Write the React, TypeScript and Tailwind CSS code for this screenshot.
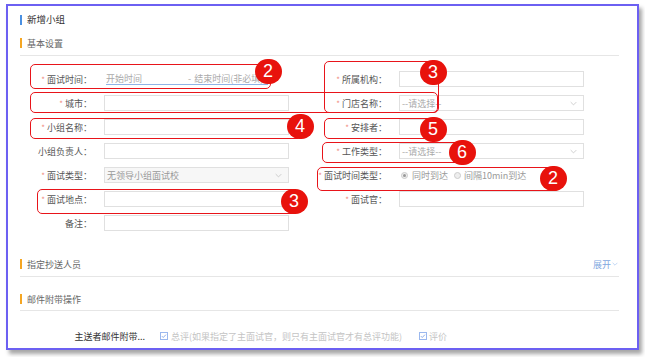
import React from 'react';

const font = { fontFamily: '"Noto Sans CJK SC", "Noto Sans", sans-serif' };

const Chevron: React.FC<{ className?: string }> = ({ className }) => (
  <svg viewBox="0 0 10 6" className={className} fill="none" stroke="currentColor" strokeWidth="1">
    <path d="M1 1l4 4 4-4" />
  </svg>
);

const Label: React.FC<{ text: string; required?: boolean; w: string }> = ({ text, required, w }) => (
  <div className={`${w} shrink-0 pr-[12px] text-right text-[#555] whitespace-nowrap`}>
    {required && <span className="text-[#f08a80] mr-[2px] text-[8px]">*</span>}
    {text}：
  </div>
);

const Input: React.FC = () => <div className="w-[185px] h-[16px] border border-[#e0e0e0] bg-white" />;

const Select: React.FC<{ text: string; disabled?: boolean }> = ({ text, disabled }) => (
  <div
    className={`w-[185px] h-[16px] border border-[#e0e0e0] flex items-center justify-between pl-[2px] pr-[6px] ${
      disabled ? 'bg-[#f7f7f7] text-[#999]' : 'bg-white text-[#aaa]'
    }`}
  >
    <span>{text}</span>
    <Chevron className="w-[7px] h-[5px] text-[#bbb]" />
  </div>
);

const Row: React.FC<{ left?: React.ReactNode; right?: React.ReactNode }> = ({ left, right }) => (
  <div className="flex h-[24px] items-center">
    <div className="w-[290px] flex items-center">{left}</div>
    <div className="flex items-center">{right}</div>
  </div>
);

const SectionHeader: React.FC<{ title: string; h: string; extra?: React.ReactNode }> = ({ title, h, extra }) => (
  <div className={`${h} flex items-center justify-between border-b border-[#e6e6e6]`}>
    <div className="flex items-center">
      <div className="w-[2px] h-[10px] bg-[#f5a623]" />
      <span className="ml-[5px] text-[#666]">{title}</span>
    </div>
    {extra}
  </div>
);

const Check: React.FC = () => (
  <span className="inline-flex w-[8px] h-[8px] border border-[#9bb8ee] items-center justify-center">
    <svg viewBox="0 0 8 8" className="w-[6px] h-[6px]" fill="none" stroke="#7fa3e6" strokeWidth="1.2">
      <path d="M1.2 4.2l1.8 1.8 3.6-3.8" />
    </svg>
  </span>
);

const Radio: React.FC<{ checked?: boolean }> = ({ checked }) => (
  <span className="inline-flex w-[7px] h-[7px] rounded-full border border-[#ccc] items-center justify-center bg-[#eee]">
    {checked && <span className="w-[3px] h-[3px] rounded-full bg-[#999]" />}
  </span>
);

type Box = { x: number; y: number; w: number; h: number; n: string; bx: number; by: number };

const boxes: Box[] = [
  { x: 30, y: 64, w: 241, h: 25, n: '2', bx: 268, by: 71 },
  { x: 30, y: 92, w: 408, h: 21, n: '', bx: 0, by: 0 },
  { x: 324, y: 61, w: 115, h: 52, n: '3', bx: 433, by: 72 },
  { x: 30, y: 118, w: 272, h: 21, n: '4', bx: 300, by: 126 },
  { x: 324, y: 118, w: 118, h: 21, n: '5', bx: 433, by: 129 },
  { x: 322, y: 142, w: 148, h: 21, n: '6', bx: 462, by: 152 },
  { x: 317, y: 167, w: 243, h: 24, n: '2', bx: 553, by: 178 },
  { x: 37, y: 189, w: 260, h: 25, n: '3', bx: 294, by: 201 },
];

export default function App() {
  return (
    <div className="relative w-[645px] h-[357px] bg-white overflow-hidden text-[9px] leading-none" style={font}>
      <div className="ml-[6px] mt-[4px] w-[633px] h-[346px] border-2 border-[#6c60f2] bg-white shadow-[3px_4px_4px_rgba(0,0,0,0.35)] pl-[12px] pr-[18px]">
        <div className="pt-[7px] h-[21px] flex items-center">
          <div className="w-[2px] h-[10px] bg-[#4a90e2]" />
          <span className="ml-[5px] text-[#333] text-[9.5px]">新增小组</span>
        </div>
        <div className="mt-[4px]">
          <SectionHeader title="基本设置" h="h-[25px]" />
        </div>
        <div className="pt-[11px]">
          <Row
            left={
              <>
                <Label text="面试时间" required w="w-[84px]" />
                <div className="flex items-center text-[#aaa] border-b border-[#8fb4e6] pb-[1px] ml-[2px] w-[162px]">
                  <span className="w-[80px]">开始时间</span>
                  <span className="ml-[2px]">-</span>
                  <span className="ml-[3px]">结束时间(非必填)</span>
                </div>
              </>
            }
            right={
              <>
                <Label text="所属机构" required w="w-[89px]" />
                <Input />
              </>
            }
          />
          <Row
            left={
              <>
                <Label text="城市" required w="w-[84px]" />
                <Input />
              </>
            }
            right={
              <>
                <Label text="门店名称" required w="w-[89px]" />
                <Select text="--请选择--" />
              </>
            }
          />
          <Row
            left={
              <>
                <Label text="小组名称" required w="w-[84px]" />
                <Input />
              </>
            }
            right={
              <>
                <Label text="安排者" required w="w-[89px]" />
                <Input />
              </>
            }
          />
          <Row
            left={
              <>
                <Label text="小组负责人" w="w-[84px]" />
                <Input />
              </>
            }
            right={
              <>
                <Label text="工作类型" required w="w-[89px]" />
                <Select text="--请选择--" />
              </>
            }
          />
          <Row
            left={
              <>
                <Label text="面试类型" required w="w-[84px]" />
                <Select text="无领导小组面试校" disabled />
              </>
            }
            right={
              <>
                <Label text="面试时间类型" required w="w-[89px]" />
                <div className="flex items-center text-[#999] ml-[2px]">
                  <Radio checked />
                  <span className="ml-[4px]">同时到达</span>
                  <span className="ml-[6px]" />
                  <Radio />
                  <span className="ml-[3px]">间隔10min到达</span>
                </div>
              </>
            }
          />
          <Row
            left={
              <>
                <Label text="面试地点" required w="w-[84px]" />
                <Input />
              </>
            }
            right={
              <>
                <Label text="面试官" required w="w-[89px]" />
                <Input />
              </>
            }
          />
          <Row
            left={
              <>
                <Label text="备注" w="w-[84px]" />
                <Input />
              </>
            }
          />
        </div>
        <div className="mt-[17px]">
          <SectionHeader
            title="指定抄送人员"
            h="h-[25px]"
            extra={
              <div className="flex items-center text-[#7fa8e0] mr-[1px]">
                <span>展开</span>
                <Chevron className="ml-[1px] w-[6px] h-[4px] text-[#9cc0ee]" />
              </div>
            }
          />
        </div>
        <div className="mt-[11px]">
          <SectionHeader title="邮件附带操作" h="h-[23px]" />
        </div>
        <div className="mt-[13px] h-[24px] flex items-center">
          <div className="w-[125px] text-right text-[#333]">主送者邮件附带...</div>
          <div className="ml-[15px] flex items-center text-[#c4c4c4]">
            <Check />
            <span className="ml-[3px]">总评(如果指定了主面试官，则只有主面试官才有总评功能)</span>
            <span className="ml-[17px]" />
            <Check />
            <span className="ml-[2px]">评价</span>
          </div>
        </div>
      </div>

      {boxes.map((b, i) => (
        <div
          key={i}
          className="absolute border border-[#e8141a] rounded-[5px]"
          style={{ left: b.x, top: b.y, width: b.w, height: b.h }}
        />
      ))}
      {boxes
        .filter((b) => b.n)
        .map((b, i) => (
          <div
            key={i}
            className="absolute w-[27px] h-[25px] -ml-[13.5px] -mt-[12.5px] rounded-full bg-[#e8120c] text-white flex items-center justify-center text-[18px]"
            style={{ left: b.bx, top: b.by, fontFamily: '"Liberation Sans", Arial, sans-serif' }}
          >
            {b.n}
          </div>
        ))}
    </div>
  );
}
